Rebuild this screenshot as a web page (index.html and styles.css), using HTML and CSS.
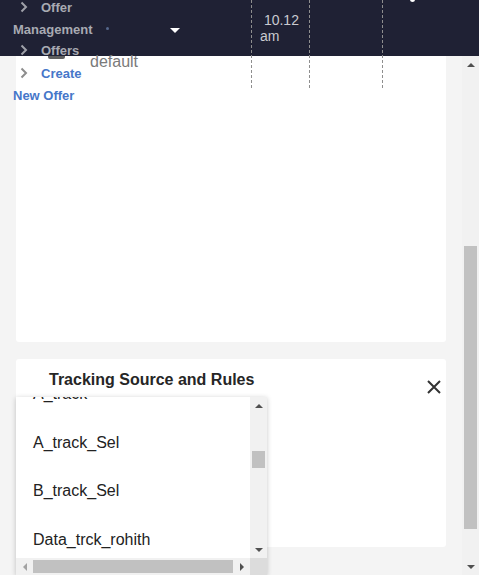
FILE: index.html
```html
<!DOCTYPE html>
<html>
<head>
<meta charset="utf-8">
<link rel="stylesheet" href="styles.css">
</head>
<body>
<div class="app">
  <header class="header">
    <ul class="nav">
      <li class="nav-item"><svg class="chev" width="8" height="12" viewBox="0 0 8 12"><polyline points="1.5,1.5 6,6 1.5,10.5" fill="none" stroke="currentColor" stroke-width="2"/></svg>Offer Management</li>
      <li class="nav-item nav-offers"><svg class="chev" width="8" height="12" viewBox="0 0 8 12"><polyline points="1.5,1.5 6,6 1.5,10.5" fill="none" stroke="currentColor" stroke-width="2"/></svg>Offers</li>
      <li class="nav-item nav-create"><svg class="chev" width="8" height="12" viewBox="0 0 8 12"><polyline points="1.5,1.5 6,6 1.5,10.5" fill="none" stroke="currentColor" stroke-width="2"/></svg><span class="link">Create New Offer</span></li>
    </ul>
    <div class="select">
      <span class="sel-dot"></span>
      <span class="caret"></span>
    </div>
    <div class="timeline">
      <div class="tcol tcol-1">&nbsp;10.12 am</div>
      <div class="tcol tcol-2"></div>
    </div>
    <span class="white-dot"></span>
  </header>
  <div class="body-row">
    <main class="main">
      <section class="card card-1">
        <span class="grip"></span>
        <span class="default">default</span>
      </section>
      <section class="card card-2">
        <h2 class="card-title">Tracking Source and Rules</h2>
        <svg class="close" width="14" height="14" viewBox="0 0 14 14"><path d="M1 1 L13 13 M13 1 L1 13" stroke="#333" stroke-width="2" fill="none"/></svg>
      </section>
    </main>
    <div class="vscroll">
      <div class="sb-btn"><span class="tri-up"></span></div>
      <div class="sb-track"><div class="sb-thumb"></div></div>
      <div class="sb-btn"><span class="tri-down"></span></div>
    </div>
  </div>
  <div class="dropdown">
    <div class="dd-list">
      <div class="dd-inner">
        <div class="dd-item">A_track</div>
        <div class="dd-item">A_track_Sel</div>
        <div class="dd-item">B_track_Sel</div>
        <div class="dd-item">Data_trck_rohith</div>
      </div>
    </div>
    <div class="dd-vbar">
      <div class="sb-btn sb-btn-s"><span class="tri-up"></span></div>
      <div class="dd-vtrack"><div class="dd-vthumb"></div></div>
      <div class="sb-btn sb-btn-s"><span class="tri-down"></span></div>
    </div>
    <div class="dd-hbar">
      <div class="hb-btn"><span class="tri-left"></span></div>
      <div class="dd-hthumb"></div>
      <div class="hb-btn"><span class="tri-right"></span></div>
    </div>
    <div class="dd-corner"></div>
  </div>
</div>
</body>
</html>
```
FILE: styles.css
```css
* { box-sizing: border-box; }
html, body { margin: 0; padding: 0; }
body {
  background: #f4f4f4;
  font-family: "Liberation Sans", Arial, sans-serif;
  overflow: hidden;
}
.app {
  position: relative;
  width: 479px;
  height: 575px;
  overflow: hidden;
}
.header {
  height: 56px;
  background: #1f2134;
  display: flex;
  align-items: flex-start;
}
.nav {
  position: relative;
  z-index: 2;
  list-style: none;
  margin: -3px 0 0 13px;
  padding: 0;
  width: 90px;
  font-size: 13px;
  font-weight: bold;
  line-height: 22px;
  color: #a8aab2;
}
.nav-item { margin: 0; }
.nav-offers { margin-top: -1px; margin-bottom: 1px; }
.chev {
  display: inline-block;
  vertical-align: -1px;
  margin: 0 13px 0 7px;
  color: #9fa1a9;
}
.nav-create .chev { color: #8d8d8d; }
.link { color: #4677c9; }
.select {
  width: 80px;
  margin-top: 27px;
  padding: 0 3px;
  display: flex;
  justify-content: space-between;
  align-items: flex-start;
}
.sel-dot {
  width: 3px;
  height: 3px;
  border-radius: 50%;
  background: #56688c;
}
.caret {
  width: 0;
  height: 0;
  margin-top: 1px;
  border-left: 5px solid transparent;
  border-right: 5px solid transparent;
  border-top: 5px solid #ffffff;
}
.timeline {
  position: relative;
  z-index: 1;
  display: flex;
  height: 88px;
  margin-left: 68px;
  flex-shrink: 0;
}
.tcol {
  height: 88px;
  border-right: 1px dashed #8e8e8e;
}
.tcol-1 {
  width: 59px;
  border-left: 1px dashed #8e8e8e;
  padding: 12px 6px 0 8px;
  font-size: 14px;
  line-height: 16px;
  color: #c9cacf;
}
.tcol-2 { width: 73px; }
.white-dot {
  width: 5px;
  height: 5px;
  margin: -3px 0 0 27px;
  border-radius: 50%;
  background: #ffffff;
}
.body-row {
  display: flex;
  height: 519px;
}
.main {
  width: 462px;
  padding: 0 16px;
  display: flex;
  flex-direction: column;
  gap: 17px;
}
.card {
  background: #ffffff;
  border-radius: 3px;
}
.card-1 {
  height: 286px;
  border-radius: 0 0 3px 3px;
  display: flex;
  align-items: flex-start;
}
.grip {
  width: 17px;
  height: 3px;
  margin-left: 32px;
  background: #5f5f5f;
  border-radius: 0 0 2px 2px;
}
.default {
  margin-left: 25px;
  font-size: 16px;
  line-height: 12px;
  color: #7a7a7a;
}
.card-2 {
  height: 188px;
  padding: 12px 5px 0 33px;
  display: flex;
  justify-content: space-between;
  align-items: flex-start;
}
.card-title {
  margin: 0;
  font-size: 16px;
  line-height: 18px;
  font-weight: bold;
  color: #262626;
}
.close { margin-top: 9px; }
.vscroll {
  width: 17px;
  background: #f1f1f1;
  display: flex;
  flex-direction: column;
}
.sb-btn {
  height: 17px;
  display: flex;
  align-items: center;
  justify-content: center;
  flex-shrink: 0;
}
.sb-track { flex: 1; }
.sb-thumb {
  margin: 173px 2px 0;
  height: 283px;
  background: #c1c1c1;
}
.tri-up, .tri-down, .tri-left, .tri-right { width: 0; height: 0; }
.tri-up {
  border-left: 4px solid transparent;
  border-right: 4px solid transparent;
  border-bottom: 4px solid #505050;
}
.tri-down {
  border-left: 4px solid transparent;
  border-right: 4px solid transparent;
  border-top: 4px solid #505050;
}
.tri-left {
  border-top: 4px solid transparent;
  border-bottom: 4px solid transparent;
  border-right: 4px solid #a3a3a3;
}
.tri-right {
  border-top: 4px solid transparent;
  border-bottom: 4px solid transparent;
  border-left: 4px solid #505050;
}
.dropdown {
  position: absolute;
  z-index: 3;
  left: 16px;
  top: 397px;
  width: 251px;
  height: 178px;
  background: #ffffff;
  box-shadow: 0 1px 5px rgba(0, 0, 0, 0.22);
  display: grid;
  grid-template-columns: 234px 17px;
  grid-template-rows: 161px 17px;
}
.dd-list { overflow: hidden; }
.dd-inner { margin-top: -27px; }
.dd-item {
  height: 48.5px;
  line-height: 48.5px;
  padding-left: 17px;
  font-size: 16px;
  color: #222222;
  white-space: nowrap;
}
.dd-vbar {
  background: #f1f1f1;
  display: flex;
  flex-direction: column;
}
.sb-btn-s { height: 17px; }
.dd-vtrack { flex: 1; }
.dd-vthumb {
  margin: 37px 2px 0;
  height: 17px;
  background: #c1c1c1;
}
.dd-hbar {
  background: #f1f1f1;
  display: flex;
  align-items: stretch;
}
.hb-btn {
  width: 17px;
  display: flex;
  align-items: center;
  justify-content: center;
  flex-shrink: 0;
}
.dd-hthumb {
  flex: 1;
  margin: 2px 0;
  background: #c1c1c1;
}
.dd-corner { background: #dcdcdc; }
```
